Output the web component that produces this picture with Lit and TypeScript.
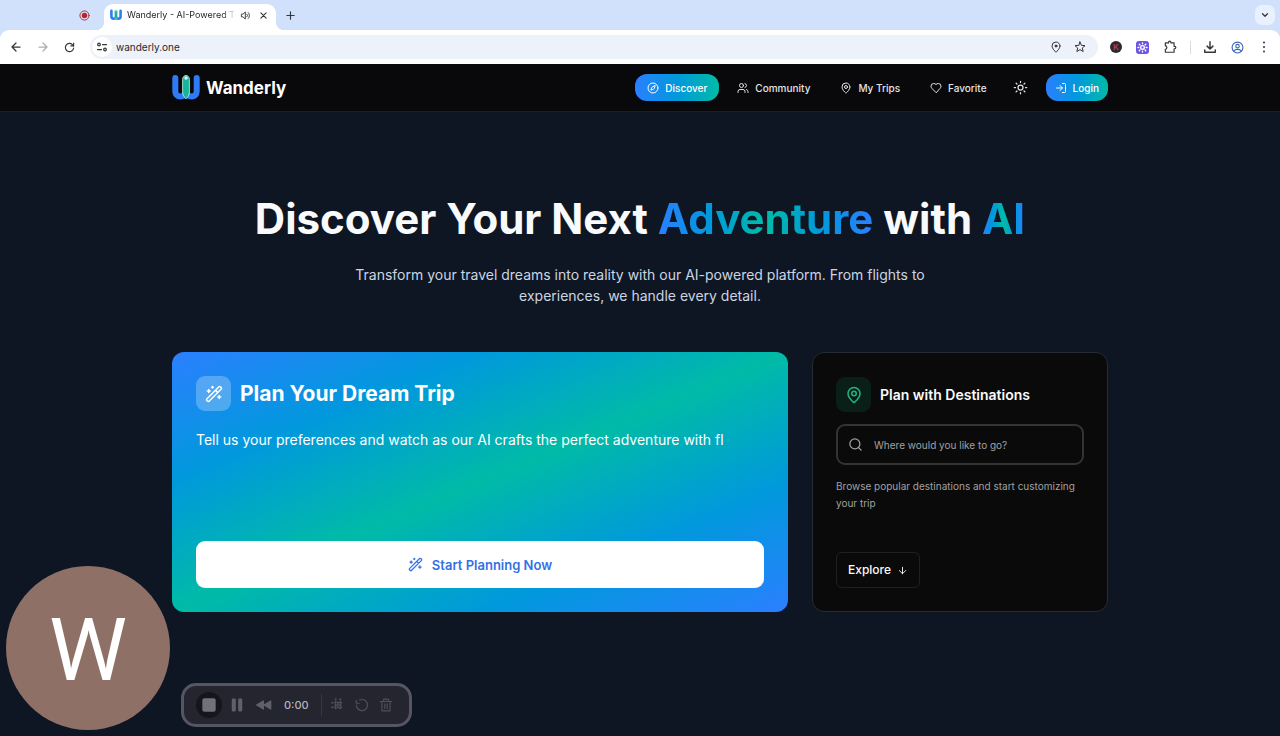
import { LitElement, html, svg, css, TemplateResult, SVGTemplateResult } from "lit";
import { customElement, property } from "lit/decorators.js";

const glyphs: Record<string, SVGTemplateResult> = {
  back: svg`<path d="M20 12H4M12 4l-8 8 8 8"/>`,
  forward: svg`<path d="M4 12h16M12 4l8 8-8 8"/>`,
  reload: svg`<path d="M21 13a9 9 0 1 1-2.700-7.400L21 8.500"/><path d="M21 2.500v6h-6"/>`,
  tune: svg`<circle cx="6" cy="7" r="2.600"/><path d="M13 7h8M3 17h8"/><circle cx="18" cy="17" r="2.600"/>`,
  pin: svg`<path d="M20 10c0 4.993-5.539 10.193-7.399 11.799a1 1 0 0 1-1.202 0C9.539 20.193 4 14.993 4 10a8 8 0 0 1 16 0"/><circle cx="12" cy="10" r="3"/>`,
  pinDot: svg`<path d="M20 10c0 5-6 10.500-8 12.500C10 20.500 4 15 4 10a8 8 0 0 1 16 0z"/><circle cx="12" cy="10" r="2" fill="currentColor"/>`,
  star: svg`<path d="M12 2l2.900 6.700 7.100.6-5.400 4.700 1.700 7L12 17.300 5.700 21l1.700-7L2 9.300l7.100-.6z"/>`,
  puzzle: svg`<path d="M4 5h5.500V4a2 2 0 0 1 4 0v1H19v6h1a2 2 0 0 1 0 4h-1v6H4v-5c3.500 0 3.500-6 0-6z"/>`,
  download: svg`<path d="M12 3v12M7 10.500l5 5 5-5M3 17v4h18v-4"/>`,
  profile: svg`<circle cx="12" cy="12" r="10"/><circle cx="12" cy="9.500" r="3.200"/><path d="M5.500 18.500c2-4 11-4 13 0"/>`,
  dots: svg`<g fill="currentColor" stroke="none"><circle cx="12" cy="3" r="2"/><circle cx="12" cy="12" r="2"/><circle cx="12" cy="21" r="2"/></g>`,
  chevron: svg`<path d="M6 9l6 6 6-6"/>`,
  close: svg`<path d="M5 5l14 14M19 5L5 19"/>`,
  plus: svg`<path d="M12 4v16M4 12h16"/>`,
  sound: svg`<path d="M11 5L6.500 9H3v6h3.500l4.500 4z"/><path d="M15 9a4 4 0 0 1 0 6M18 5.500a9 9 0 0 1 0 13"/>`,
  record: svg`<circle cx="12" cy="12" r="10"/><circle cx="12" cy="12" r="6" fill="currentColor" stroke="none"/>`,
  compass: svg`<path d="m16.240 7.760-1.804 5.411a2 2 0 0 1-1.265 1.265L7.760 16.240l1.804-5.411a2 2 0 0 1 1.265-1.265z"/><circle cx="12" cy="12" r="10"/>`,
  users: svg`<path d="M16 21v-2a4 4 0 0 0-4-4H6a4 4 0 0 0-4 4v2"/><circle cx="9" cy="7" r="4"/><path d="M22 21v-2a4 4 0 0 0-3-3.870M16 3.130a4 4 0 0 1 0 7.750"/>`,
  heart: svg`<path d="M19 14c1.490-1.460 3-3.210 3-5.500A5.500 5.500 0 0 0 16.500 3c-1.760 0-3 .5-4.500 2-1.500-1.500-2.740-2-4.500-2A5.500 5.500 0 0 0 2 8.500c0 2.300 1.500 4.050 3 5.500l7 7Z"/>`,
  sun: svg`<circle cx="12" cy="12" r="4"/><path d="M12 2v2M12 20v2M4.930 4.930l1.410 1.410M17.660 17.660l1.410 1.410M2 12h2M20 12h2M6.340 17.660l-1.410 1.410M19.070 4.930l-1.410 1.410"/>`,
  login: svg`<path d="M15 3h4a2 2 0 0 1 2 2v14a2 2 0 0 1-2 2h-4M10 17l5-5-5-5M15 12H3"/>`,
  wand: svg`<path d="m21.640 3.640-1.280-1.280a1.210 1.210 0 0 0-1.720 0L2.360 18.640a1.210 1.210 0 0 0 0 1.720l1.280 1.280a1.200 1.200 0 0 0 1.720 0L21.640 5.360a1.200 1.200 0 0 0 0-1.720M14 7l3 3M5 6v4M19 14v4M10 2v2M7 8H3M21 16h-4M11 3H9"/>`,
  search: svg`<circle cx="11" cy="11" r="8"/><path d="m21 21-4.300-4.300"/>`,
  down: svg`<path d="M12 5v14M19 12l-7 7-7-7"/>`,
  stop: svg`<rect x="2" y="2" width="20" height="20" rx="3" fill="currentColor" stroke="none"/>`,
  pause: svg`<g fill="currentColor" stroke="none"><rect x="3" y="1" width="7" height="22" rx="2"/><rect x="14" y="1" width="7" height="22" rx="2"/></g>`,
  rewind: svg`<g fill="currentColor"><path d="M11 6v12L1 12zM22 6v12L12 12z"/></g>`,
  grid: svg`<path d="M8 2v20M16 2v20M2 8h20M2 16h20" stroke-dasharray=".5 4.500" stroke-width="3.500"/><path d="M12 7v10M7 12h10" stroke-width="1.500"/>`,
  restart: svg`<path d="M8 3.500A9.500 9.500 0 1 1 2.500 12"/><path d="M2 4v5h5"/>`,
  trash: svg`<path d="M2 6h20M5 6v16h14V6M8 6V2h8v4M10 10v8M14 10v8"/>`,
};

const icon = (name: string, size: number, weight = 2): TemplateResult => html`
  <svg width=${size} height=${size} viewBox="0 0 24 24" fill="none" stroke="currentColor"
    stroke-width=${weight} stroke-linecap="round" stroke-linejoin="round" aria-hidden="true">${glyphs[name]}</svg>`;

const logo = (size: number): TemplateResult => html`
  <svg width=${size} height=${size} viewBox="0 0 28 28" fill="none" aria-hidden="true">
    <path d="M3.300 4v13.500a5 5 0 0 0 5 5c3.200 0 5.200-2 5.700-4.500.5 2.500 2.500 4.500 5.700 4.500a5 5 0 0 0 5-5V4"
      stroke="#2f7bf6" stroke-width="6" stroke-linecap="round" stroke-linejoin="round"/>
    <path d="M14 1.500c-2.200 0-3.400 1.800-3.400 4V18c0 3 1.600 5 3.400 6.800 1.800-1.800 3.400-3.800 3.400-6.800V5.500c0-2.200-1.200-4-3.400-4z"
      fill="#14b59a" stroke="#c9f3ee" stroke-width=".8"/>
    <circle cx="14" cy="4" r="1.700" fill="#e6fbf8"/>
  </svg>`;

const base = css`
  *, *::before, *::after { box-sizing: border-box; }
  svg { display: block; flex: none; }
  button, input { font: inherit; color: inherit; margin: 0; padding: 0; border: 0; background: none; }
  button { cursor: pointer; }
  a { color: inherit; text-decoration: none; }
`;

@customElement("browser-bar")
class BrowserBar extends LitElement {
  static styles = [base, css`
    :host { display: block; color: #34363b; background: #d2e1fb; }
    .tabs { display: flex; align-items: center; height: 30px; padding: 0 5px 0 79px; }
    .rec { color: #b3262e; margin-right: 14px; }
    .tab { position: relative; display: flex; align-items: center; align-self: flex-end; width: 172px; height: 26px;
      padding: 0 6px 4px; border-radius: 9px 9px 0 0; background: #fff; }
    .tab::before, .tab::after { content: ""; position: absolute; bottom: 0; width: 8px; height: 8px; }
    .tab::before { right: 100%; background: radial-gradient(circle at 0 0, transparent 8px, #fff 8px); }
    .tab::after { left: 100%; background: radial-gradient(circle at 100% 0, transparent 8px, #fff 8px); }
    .title { flex: 1; min-width: 0; margin: 0 2px 0 5px; white-space: nowrap; font-size: 9px; line-height: 14px;
      color: #1f2124; mask-image: linear-gradient(to right, #000 86%, transparent 98%); }
    .close { margin: 0 2px 0 8px; }
    .new { margin-left: 9px; }
    .menu { display: grid; place-items: center; width: 20px; height: 20px; margin-left: auto; border-radius: 7px; background: #e9f1fe; }
    .tools { display: flex; align-items: center; height: 34px; padding: 0 10px; border-radius: 9px 9px 0 0; background: #fff; }
    .nav { margin-right: 15px; }
    .nav.off { color: #aaadb2; }
    .address { display: flex; align-items: center; flex: 1; height: 24px; padding: 0 12px 0 2px; margin-right: 12px;
      border-radius: 12px; background: #edf1f9; }
    .site { display: grid; place-items: center; width: 20px; height: 20px; border-radius: 10px; background: #fff; }
    .url { flex: 1; min-width: 0; margin-left: 4px; font-size: 10px; line-height: 16px; color: #26282c; outline: 0; }
    .mark { margin-left: 12px; }
    .ext { display: flex; align-items: center; gap: 14px; }
    .k { display: grid; place-items: center; width: 12px; height: 12px; border-radius: 6px; background: #2a2930; color: #b53b52;
      font-size: 8px; font-weight: 700; line-height: 12px; }
    .gear { display: grid; place-items: center; width: 13px; height: 13px; border-radius: 3px; background: #6d53e6; color: #fff; }
    .split { width: 1px; height: 13px; margin: 0 -2px 0 -1px; background: #d6dbe4; }
    .profile { color: #3562b8; }
  `];

  render() {
    return html`
      <div class="tabs">
        <span class="rec">${icon("record", 11, 2)}</span>
        <div class="tab">
          ${logo(12)}<span class="title">Wanderly - AI-Powered Tr</span>
          ${icon("sound", 11)}
          <button class="close" aria-label="Close tab">${icon("close", 9, 3)}</button>
        </div>
        <button class="new" aria-label="New tab">${icon("plus", 11, 2.5)}</button>
        <button class="menu" aria-label="Search tabs">${icon("chevron", 10, 3)}</button>
      </div>
      <div class="tools">
        <button class="nav" aria-label="Back">${icon("back", 12, 2.5)}</button>
        <button class="nav off" aria-label="Forward">${icon("forward", 12, 2.5)}</button>
        <button class="nav" aria-label="Reload">${icon("reload", 11, 2.5)}</button>
        <div class="address">
          <span class="site">${icon("tune", 12, 2.5)}</span>
          <input class="url" aria-label="Address" value="wanderly.one">
          <button class="mark" aria-label="Location">${icon("pinDot", 12)}</button>
          <button class="mark" aria-label="Bookmark">${icon("star", 12)}</button>
        </div>
        <div class="ext">
          <span class="k">K</span>
          <span class="gear">${icon("sun", 11, 3)}</span>
          ${icon("puzzle", 14)}
          <span class="split"></span>
          ${icon("download", 14, 2.5)}
          <span class="profile">${icon("profile", 13)}</span>
          ${icon("dots", 12)}
        </div>
      </div>`;
  }
}

@customElement("site-header")
class SiteHeader extends LitElement {
  @property() current = "Discover";

  static styles = [base, css`
    :host { display: block; background: #09090b; border-bottom: 1px solid #1d1c26; color: #e4e4e7; }
    .row { display: flex; align-items: center; justify-content: space-between; max-width: 936px; height: 47px; margin: 0 auto; }
    .brand { display: flex; align-items: center; gap: 6px; font-size: 17px; font-weight: 700; line-height: 24px; color: #fff; }
    nav { display: flex; align-items: center; gap: 6px; font-size: 10px; font-weight: 500; line-height: 16px; }
    .link { display: flex; align-items: center; gap: 6px; height: 27px; padding: 0 12px; border-radius: 12px; }
    .active { color: #fff; background: linear-gradient(to right, #2b7fff, #0099dc 50%, #00bba7); }
    .theme { display: grid; place-items: center; width: 32px; height: 27px; }
    .login { margin-left: 3px; padding: 0 9px; }
  `];

  render() {
    const links = [["Discover", "compass"], ["Community", "users"], ["My Trips", "pin"], ["Favorite", "heart"]];
    return html`
      <div class="row">
        <a class="brand" href="#">${logo(28)}Wanderly</a>
        <nav>
          ${links.map(([label, glyph]) => html`
            <a class="link ${label === this.current ? "active" : ""}" href="#">${icon(glyph, 12)}${label}</a>`)}
          <button class="theme" aria-label="Toggle theme">${icon("sun", 15)}</button>
          <button class="link active login">${icon("login", 12)}Login</button>
        </nav>
      </div>`;
  }
}

@customElement("recorder-bar")
class RecorderBar extends LitElement {
  static styles = [base, css`
    :host { display: flex; align-items: center; height: 44px; padding: 0 16px 0 12px; border: 3px solid #545763; border-radius: 15px;
      background: #25252f; color: #60606a; }
    .stop { display: grid; place-items: center; width: 26px; height: 26px; margin-right: 8px; border-radius: 13px; background: #15151d; color: #71717a; }
    .control { margin-right: 12px; }
    .time { font-size: 11px; font-weight: 500; line-height: 16px; color: #b4b4bb; }
    .split { width: 1px; height: 22px; margin: 0 9px 0 12px; background: #373741; }
    .tools { display: flex; gap: 10px; color: #50505a; }
  `];

  render() {
    return html`
      <button class="stop" aria-label="Stop">${icon("stop", 16)}</button>
      <button class="control" aria-label="Pause">${icon("pause", 14)}</button>
      <button class="control" aria-label="Rewind">${icon("rewind", 16)}</button>
      <span class="time">0:00</span>
      <span class="split"></span>
      <div class="tools">
        <button aria-label="Effects">${icon("grid", 14)}</button>
        <button aria-label="Restart">${icon("restart", 14)}</button>
        <button aria-label="Delete">${icon("trash", 14)}</button>
      </div>`;
  }
}

@customElement("app-root")
class AppRoot extends LitElement {
  static styles = [base, css`
    :host { position: relative; display: flex; flex-direction: column; min-height: 100vh; overflow: hidden;
      background: #0f1623; font-family: Inter, "Liberation Sans", sans-serif; }
    main { width: 100%; max-width: 936px; margin: 0 auto; padding-top: 80px; }
    h1, h2, p { margin: 0; }
    .hero { text-align: center; }
    h1 { font-size: 42px; font-weight: 700; line-height: 54px; color: #f8fafc; }
    .shine { color: transparent; background: linear-gradient(to right, #2b7fff, #0099dc 25%, #00bba7 50%, #0099dc 75%, #2b7fff);
      background-clip: text; -webkit-background-clip: text; }
    .lead { max-width: 600px; margin: 18px auto 46px; font-size: 14px; line-height: 21px; color: #cbd5e1; }
    .cards { display: grid; grid-template-columns: repeat(3, minmax(0, 1fr)); gap: 24px; }
    .card { display: flex; flex-direction: column; border-radius: 12px; }
    .dream { grid-column: span 2; padding: 24px; color: #fff;
      background: linear-gradient(to bottom right, #2b7fff, #0099dc 25%, #00bba7 50%, #0099dc 75%, #2b7fff); }
    .places { padding: 24px 23px 23px; border: 1px solid #272b33; background: #0a0a0a; color: #fafafa; }
    .head { display: flex; align-items: center; gap: 9px; }
    .badge { display: grid; place-items: center; width: 35px; height: 35px; border-radius: 9px; background: rgba(255, 255, 255, .25); }
    .places .badge { background: #0a1f18; color: #1fb583; }
    h2 { font-size: 21px; font-weight: 700; line-height: 30px; }
    .places h2 { font-size: 14px; font-weight: 600; }
    .pitch { margin-top: 18px; font-size: 14px; line-height: 21px; }
    .start { display: flex; align-items: center; justify-content: center; gap: 9px; height: 47px; margin-top: auto; border-radius: 9px;
      background: #fff; color: #3570e4; font-size: 13px; font-weight: 600; line-height: 20px; }
    .search { display: flex; align-items: center; gap: 11px; height: 41px; margin: 12px 0 13px; padding: 0 10px; border: 2px solid #343434;
      border-radius: 9px; color: #a1a1a1; }
    .search input { flex: 1; min-width: 0; font-size: 10px; line-height: 16px; outline: 0; }
    .search input::placeholder { color: #a1a1a1; opacity: 1; }
    .note { font-size: 10px; line-height: 17px; color: #a1a1a1; }
    .explore { display: flex; align-items: center; align-self: flex-start; gap: 6px; height: 36px; margin-top: 40px; padding: 0 11px;
      border: 1px solid #202020; border-radius: 6px; font-size: 12px; font-weight: 500; line-height: 16px; }
    .avatar { position: absolute; left: 6px; bottom: 6px; width: 164px; height: 164px; border-radius: 82px; text-align: center;
      background: #8f7066; color: #fff; font: 400 88px/168px Roboto, sans-serif; }
    .recorder { position: absolute; left: 181px; bottom: 9px; }
  `];

  render() {
    return html`
      <browser-bar></browser-bar>
      <site-header current="Discover"></site-header>
      <main>
        <section class="hero">
          <h1>Discover Your Next <span class="shine">Adventure</span> with <span class="shine">AI</span></h1>
          <p class="lead">Transform your travel dreams into reality with our AI-powered platform. From flights to experiences, we handle every detail.</p>
        </section>
        <section class="cards">
          <article class="card dream">
            <div class="head"><span class="badge">${icon("wand", 18)}</span><h2>Plan Your Dream Trip</h2></div>
            <p class="pitch">Tell us your preferences and watch as our AI crafts the perfect adventure with fl</p>
            <button class="start">${icon("wand", 15)}Start Planning Now</button>
          </article>
          <article class="card places">
            <div class="head"><span class="badge">${icon("pin", 18)}</span><h2>Plan with Destinations</h2></div>
            <label class="search">${icon("search", 15)}<input type="search" aria-label="Destination" placeholder="Where would you like to go?"></label>
            <p class="note">Browse popular destinations and start customizing your trip</p>
            <button class="explore">Explore ${icon("down", 11)}</button>
          </article>
        </section>
      </main>
      <div class="avatar">W</div>
      <recorder-bar class="recorder"></recorder-bar>`;
  }
}
